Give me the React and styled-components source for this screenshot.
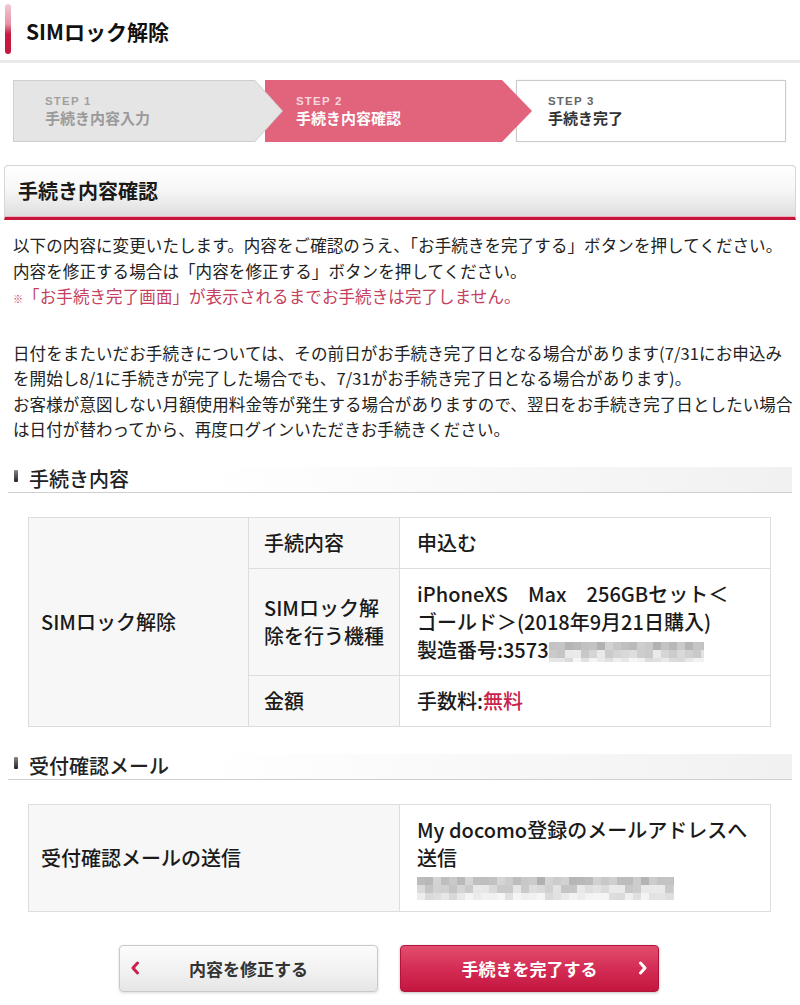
import React from "react";
import styled, { createGlobalStyle } from "styled-components";

const Global = createGlobalStyle`
  html, body { margin: 0; padding: 0; background: #fff; }
  body {
    font-family: "Noto Sans CJK JP", "Noto Sans", sans-serif;
    color: #222;
    -webkit-font-smoothing: antialiased;
  }
  * { box-sizing: border-box; }
`;

const Page = styled.div`
  width: 800px;
  padding-bottom: 12px;
`;

const PageHeader = styled.header`
  display: flex;
  align-items: center;
  height: 63px;
  padding-left: 5px;
  padding-bottom: 3px;
  border-bottom: 3px solid #e9e9e9;
`;

const TitleMark = styled.span`
  width: 6px;
  height: 50px;
  border-radius: 3px;
  margin-right: 15px;
  background: linear-gradient(#f3c9d2 0%, #e693a6 40%, #c81a42 60%, #c5173e 100%);
`;

const PageTitle = styled.h1`
  margin: 4px 0 0;
  font-size: 21px;
  font-weight: 700;
  color: #111;
  letter-spacing: 0;
`;

const StepBar = styled.ol`
  display: flex;
  list-style: none;
  margin: 17px 14px 0 13px;
  padding: 0;
  height: 62px;
`;

const stepTheme = {
  done: { bg: "#e5e5e5", border: "#cfcfcf", small: "#a0a0a0", label: "#9a9a9a" },
  current: { bg: "#e1637c", border: "#e1637c", small: "#f8d6de", label: "#ffffff" },
  next: { bg: "#ffffff", border: "#cccccc", small: "#666", label: "#333" },
};

const Step = styled.li`
  position: relative;
  display: flex;
  flex-direction: column;
  justify-content: center;
  padding-left: 31px;
  height: 62px;
  background: ${(p) => stepTheme[p.$state].bg};
  z-index: ${(p) => p.$z};
  ${(p) =>
    p.$state === "done" &&
    `
    width: 242px;
    border: 1px solid #cfcfcf;
    border-right: none;
    &::before {
      content: "";
      position: absolute;
      left: 100%;
      top: -1px;
      border-left: 28px solid #cfcfcf;
      border-top: 31px solid transparent;
      border-bottom: 31px solid transparent;
    }
    &::after {
      content: "";
      position: absolute;
      left: 100%;
      top: 0;
      border-left: 27px solid #e5e5e5;
      border-top: 30px solid transparent;
      border-bottom: 30px solid transparent;
    }
  `}
  ${(p) =>
    p.$state === "current" &&
    `
    width: 237px;
    margin-left: 10px;
    &::after {
      content: "";
      position: absolute;
      left: 100%;
      top: 0;
      border-left: 30px solid #e1637c;
      border-top: 31px solid transparent;
      border-bottom: 31px solid transparent;
    }
  `}
  ${(p) =>
    p.$state === "next" &&
    `
    flex: 1;
    margin-left: 14px;
    border: 1px solid #cacaca;
    box-shadow: 0 0 2px rgba(0,0,0,0.08);
  `}
`;

const StepNo = styled.span`
  font-family: "Liberation Sans", Arial, sans-serif;
  font-size: 11.5px;
  font-weight: 700;
  letter-spacing: 1.2px;
  line-height: 14px;
  color: ${(p) => stepTheme[p.$state].small};
`;

const StepLabel = styled.span`
  font-size: 15px;
  font-weight: 700;
  line-height: 20px;
  color: ${(p) => stepTheme[p.$state].label};
`;

const SectionBox = styled.h2`
  margin: 23px 4px 0;
  height: 55px;
  display: flex;
  align-items: center;
  padding: 0 13px 2px;
  border: 1px solid #d6d6d6;
  border-bottom: 3px solid #c5173e;
  border-radius: 4px 4px 0 0;
  background: linear-gradient(#ffffff 0%, #f7f7f7 45%, #dedede 100%);
  box-shadow: inset 0 -1px 0 #f2b3c0;
  font-size: 20px;
  font-weight: 700;
  color: #1a1a1a;
`;

const Text = styled.p`
  margin: ${(p) => p.$mt || 0}px 0 0;
  padding: 0 4px 0 13px;
  font-size: 16.5px;
  letter-spacing: 0.1px;
  line-height: 25.5px;
  color: #222;
  white-space: nowrap;
`;

const Note = styled.span`
  color: #c4405e;
`;

const NoteMark = styled.span`
  font-size: 10px;
`;

const SubHeading = styled.h3`
  margin: ${(p) => p.$mt}px 8px 0;
  display: flex;
  align-items: center;
  height: 26px;
  padding-left: 6px;
  border-bottom: 1px solid #cfcfcf;
  background: linear-gradient(to right, #ffffff 25%, #f1f1f1 100%);
  font-size: 20px;
  font-weight: 500;
  line-height: 26px;
  color: #222;
`;

const HeadMark = styled.span`
  width: 4px;
  height: 12px;
  margin: -6px 11px 0 0;
  border-radius: 1px;
  background: linear-gradient(#888, #222);
`;

const Table = styled.table`
  margin: 24px 0 0 28px;
  width: 742px;
  border-collapse: collapse;
  table-layout: fixed;
  font-size: 20px;
  font-weight: 500;
  line-height: 28px;
  color: #1a1a1a;
`;

const Cell = styled.td`
  border: 1px solid #dddddd;
  padding: 11px 8px 11px ${(p) => p.$pl || 15}px;
  background: ${(p) => (p.$head ? "#f7f7f7" : "#ffffff")};
  vertical-align: middle;
  white-space: ${(p) => (p.$nowrap ? "nowrap" : "normal")};
`;

const Red = styled.span`
  color: #c8234a;
`;

const Mosaic = styled.svg`
  display: inline-block;
  vertical-align: ${(p) => p.$va || "middle"};
`;

function Pixelated({ width, height, cell = 8, seed = 1, va }) {
  const cols = Math.ceil(width / cell);
  const rows = Math.ceil(height / cell);
  const rects = [];
  let s = seed;
  const rnd = () => {
    s = (s * 9301 + 49297) % 233280;
    return s / 233280;
  };
  for (let r = 0; r < rows; r++) {
    for (let c = 0; c < cols; c++) {
      const base = r === 0 ? 185 : r === 1 ? 205 : 225;
      const v = Math.round(base + rnd() * 40 - 10);
      const g = Math.min(245, Math.max(150, v));
      rects.push(
        <rect key={`${r}-${c}`} x={c * cell} y={r * cell} width={cell} height={cell} fill={`rgb(${g},${g},${g})`} />
      );
    }
  }
  return (
    <Mosaic width={width} height={height} viewBox={`0 0 ${width} ${height}`} $va={va}>
      {rects}
    </Mosaic>
  );
}

const ButtonRow = styled.div`
  display: flex;
  justify-content: center;
  gap: 22px;
  margin-top: 33px;
  padding-right: 22px;
`;

const Button = styled.button`
  width: 259px;
  height: 47px;
  display: grid;
  grid-template-columns: 20px 1fr 20px;
  align-items: center;
  padding: 0 10px;
  border-radius: 4px;
  font-family: "Noto Sans CJK JP", sans-serif;
  font-size: 17px;
  font-weight: 700;
  cursor: pointer;
  ${(p) =>
    p.$primary
      ? `
    border: 1px solid #b5143a;
    background: linear-gradient(#e24d6d 0%, #d42d55 50%, #c3163f 100%);
    color: #fff;
    box-shadow: 0 1px 3px rgba(0,0,0,0.25);
  `
      : `
    border: 1px solid #c9c9c9;
    background: linear-gradient(#fcfcfc 0%, #f0f0f0 60%, #e6e6e6 100%);
    color: #333;
    box-shadow: 0 1px 3px rgba(0,0,0,0.15);
  `}
`;

const ButtonText = styled.span`
  text-align: center;
  grid-column: 2;
`;

const Chevron = ({ dir, color }) => (
  <svg width="10" height="14" viewBox="0 0 10 14" style={{ justifySelf: dir === "left" ? "start" : "end" }}>
    <path
      d={dir === "left" ? "M7.5 2 L3 7 L7.5 12" : "M2.5 2 L7 7 L2.5 12"}
      fill="none"
      stroke={color}
      strokeWidth="3"
      strokeLinecap="round"
      strokeLinejoin="round"
    />
  </svg>
);

export default function App() {
  return (
    <Page>
      <Global />
      <PageHeader>
        <TitleMark />
        <PageTitle>SIMロック解除</PageTitle>
      </PageHeader>

      <StepBar>
        <Step $state="done" $z={3}>
          <StepNo $state="done">STEP 1</StepNo>
          <StepLabel $state="done">手続き内容入力</StepLabel>
        </Step>
        <Step $state="current" $z={2}>
          <StepNo $state="current">STEP 2</StepNo>
          <StepLabel $state="current">手続き内容確認</StepLabel>
        </Step>
        <Step $state="next" $z={1}>
          <StepNo $state="next">STEP 3</StepNo>
          <StepLabel $state="next">手続き完了</StepLabel>
        </Step>
      </StepBar>

      <SectionBox>手続き内容確認</SectionBox>

      <Text $mt={13}>
        以下の内容に変更いたします。内容をご確認のうえ、「お手続きを完了する」ボタンを押してください。
        <br />
        内容を修正する場合は「内容を修正する」ボタンを押してください。
        <br />
        <Note>
          <NoteMark>※</NoteMark>「お手続き完了画面」が表示されるまでお手続きは完了しません。
        </Note>
      </Text>
      <Text $mt={29}>
        日付をまたいだお手続きについては、その前日がお手続き完了日となる場合があります(7/31にお申込み
        <br />
        を開始し8/1に手続きが完了した場合でも、7/31がお手続き完了日となる場合があります)。
        <br />
        お客様が意図しない月額使用料金等が発生する場合がありますので、翌日をお手続き完了日としたい場合
        <br />
        は日付が替わってから、再度ログインいただきお手続きください。
      </Text>

      <SubHeading $mt={24}>
        <HeadMark />
        手続き内容
      </SubHeading>

      <Table>
        <colgroup>
          <col style={{ width: 220 }} />
          <col style={{ width: 151 }} />
          <col style={{ width: 371 }} />
        </colgroup>
        <tbody>
          <tr>
            <Cell $head $pl={12} rowSpan={3}>
              SIMロック解除
            </Cell>
            <Cell $head>手続内容</Cell>
            <Cell $pl={17}>申込む</Cell>
          </tr>
          <tr>
            <Cell $head>
              SIMロック解
              <br />
              除を行う機種
            </Cell>
            <Cell $pl={17} $nowrap>
              iPhoneXS　Max　256GBセット＜
              <br />
              ゴールド＞(2018年9月21日購入)
              <br />
              製造番号:3573
              <Pixelated width={155} height={20} cell={8} seed={7} va="-4px" />
            </Cell>
          </tr>
          <tr>
            <Cell $head>金額</Cell>
            <Cell $pl={17}>
              手数料:<Red>無料</Red>
            </Cell>
          </tr>
        </tbody>
      </Table>

      <SubHeading $mt={27}>
        <HeadMark />
        受付確認メール
      </SubHeading>

      <Table>
        <colgroup>
          <col style={{ width: 371 }} />
          <col style={{ width: 371 }} />
        </colgroup>
        <tbody>
          <tr>
            <Cell $head $pl={12}>
              受付確認メールの送信
            </Cell>
            <Cell $pl={17} $nowrap>
              My docomo登録のメールアドレスへ
              <br />
              送信
              <br />
              <Pixelated width={257} height={23} cell={8} seed={3} va="-6px" />
            </Cell>
          </tr>
        </tbody>
      </Table>

      <ButtonRow>
        <Button type="button">
          <Chevron dir="left" color="#c8234a" />
          <ButtonText>内容を修正する</ButtonText>
        </Button>
        <Button type="button" $primary>
          <ButtonText>手続きを完了する</ButtonText>
          <Chevron dir="right" color="#ffffff" />
        </Button>
      </ButtonRow>
    </Page>
  );
}
